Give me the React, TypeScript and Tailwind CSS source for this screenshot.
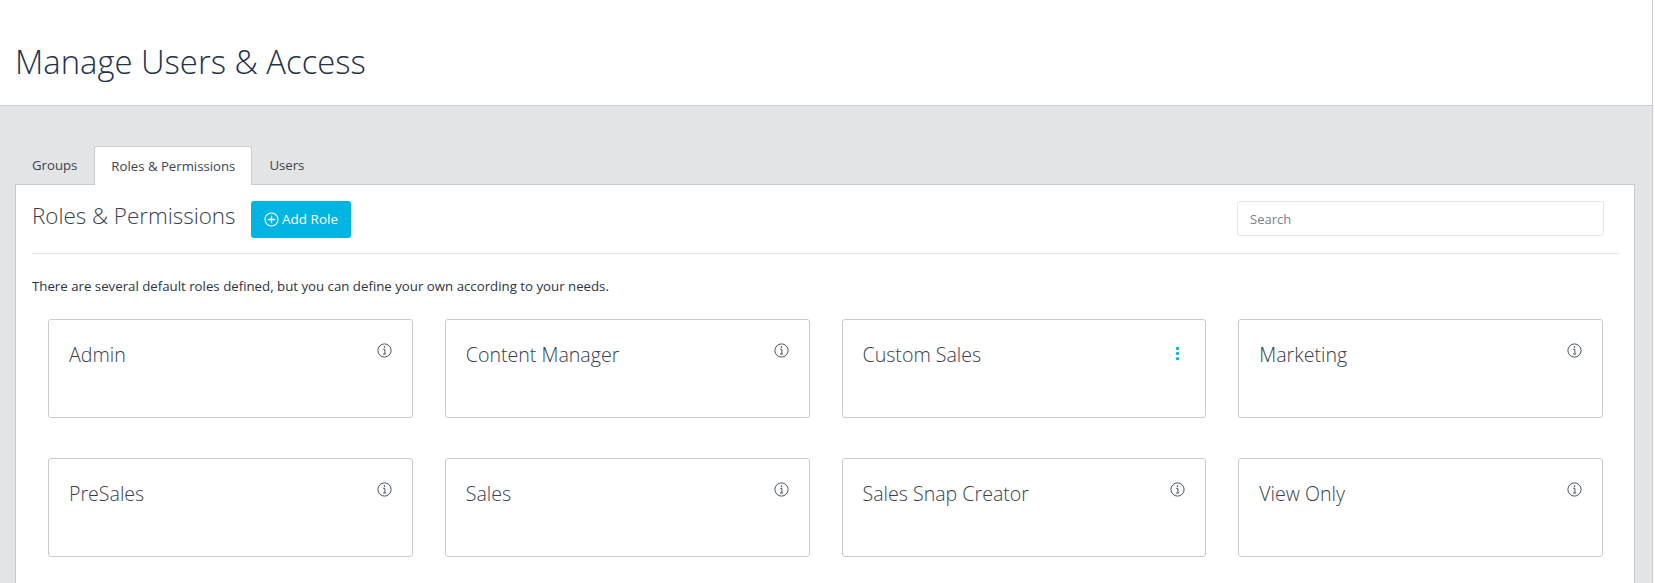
const roles: { name: string; menu?: boolean }[] = [
  { name: "Admin" },
  { name: "Content Manager" },
  { name: "Custom Sales", menu: true },
  { name: "Marketing" },
  { name: "PreSales" },
  { name: "Sales" },
  { name: "Sales Snap Creator" },
  { name: "View Only" },
];

function InfoIcon() {
  return (
    <svg width="15" height="15" viewBox="0 0 15 15" fill="none" className="mt-[2px] text-[#3a4250]">
      <circle cx="7.5" cy="7.5" r="6.6" stroke="currentColor" strokeWidth="0.9" />
      <circle cx="7.5" cy="4.1" r="0.8" fill="currentColor" />
      <path d="M6.2 6.3H7.9V10.8M6 11H9.2" stroke="currentColor" strokeWidth="0.9" />
    </svg>
  );
}

function DotsIcon() {
  return (
    <svg width="15" height="15" viewBox="0 0 15 15" className="mt-[5px] text-[#00b5e2]">
      <rect x="6" y="1" width="3" height="3" rx="1" fill="currentColor" />
      <rect x="6" y="6" width="3" height="3" rx="1" fill="currentColor" />
      <rect x="6" y="11.3" width="3" height="3" rx="1" fill="currentColor" />
    </svg>
  );
}

function PlusCircle() {
  return (
    <svg width="15" height="15" viewBox="0 0 15 15" fill="none" className="text-white">
      <circle cx="7.5" cy="7.5" r="6.5" stroke="currentColor" strokeWidth="1.1" />
      <path d="M7.5 3.8V11.2M3.8 7.5H11.2" stroke="currentColor" strokeWidth="1.4" />
    </svg>
  );
}

export default function App() {
  return (
    <div className="flex h-[583px] w-full overflow-hidden bg-white font-['Open_Sans','Noto_Sans',sans-serif] text-[#2f3a4a]">
      <div className="flex min-w-0 flex-1 flex-col">
        <header className="h-[106px] shrink-0 border-b border-[#c8ccd2] bg-white pl-[15px] pt-[37px]">
          <h1 className="text-[32.8px] leading-[50px] font-light text-[#22324a]">Manage Users &amp; Access</h1>
        </header>
        <main className="flex-1 bg-[#e3e4e6] pl-[15px] pr-[17px] pt-[40px]">
          <nav className="flex h-[38px] items-stretch text-[13.2px] text-[#3b4350]">
            <div className="flex items-center px-[17px] pt-[2px]">Groups</div>
            <div className="relative z-10 -mb-px flex items-center rounded-t-[3px] border border-b-0 border-[#c8ccd2] bg-white px-[16px] pt-[2px]">
              Roles &amp; Permissions
            </div>
            <div className="flex items-center px-[17px] pt-[2px]">Users</div>
          </nav>
          <section className="h-[500px] border border-[#c8ccd2] bg-white pl-[16px] pr-[15px] pt-[16px]">
            <div className="flex h-[53px] items-start border-b border-[#e3e5e8]">
              <h2 className="-mt-[1px] w-[219px] text-[22.4px] leading-[32px] font-light text-[#37404e]">Roles &amp; Permissions</h2>
              <button className="flex h-[37px] w-[100px] items-center justify-center gap-[3px] rounded-[3px] bg-[#00b5e2] text-[13.5px] font-medium text-white">
                <PlusCircle />
                Add Role
              </button>
              <input
                placeholder="Search"
                className="ml-auto mr-[15px] h-[35px] w-[367px] rounded-[3px] border border-[#e3e5e8] px-[12px] text-[13px] placeholder:text-[#77808c]"
              />
            </div>
            <p className="mt-[23px] text-[13.25px] leading-[18px] text-[#2b3442]">
              There are several default roles defined, but you can define your own according to your needs.
            </p>
            <div className="mt-[24px] grid grid-cols-4 gap-x-[32px] gap-y-[40px] pl-[16px] pr-[16px]">
              {roles.map((r) => (
                <div
                  key={r.name}
                  className="flex h-[99px] items-start justify-between rounded-[3px] border border-[#c8ccd2] pl-[20px] pr-[20px] pt-[21px]"
                >
                  <span className="text-[19.6px] leading-[28px] font-light text-[#37404e]">{r.name}</span>
                  {r.menu ? <DotsIcon /> : <InfoIcon />}
                </div>
              ))}
            </div>
          </section>
        </main>
      </div>
      <div className="w-[3px] shrink-0 border-l border-[#c8ccd2] bg-white" />
    </div>
  );
}
